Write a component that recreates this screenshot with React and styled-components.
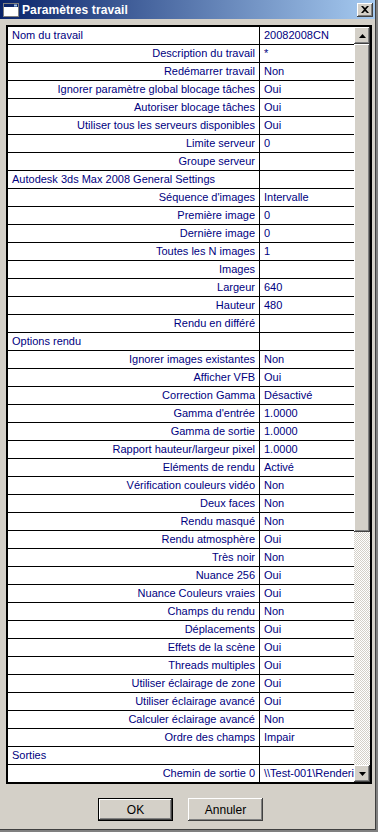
import styled, { createGlobalStyle, css } from "styled-components";

const GlobalStyle = createGlobalStyle`
  html, body {
    margin: 0;
    padding: 0;
    background: #d4d0c8;
  }
  * {
    box-sizing: border-box;
  }
`;

const ROWS = [
  ["Nom du travail", "20082008CN", "left"],
  ["Description du travail", "*"],
  ["Redémarrer travail", "Non"],
  ["Ignorer paramètre global blocage tâches", "Oui"],
  ["Autoriser blocage tâches", "Oui"],
  ["Utiliser tous les serveurs disponibles", "Oui"],
  ["Limite serveur", "0"],
  ["Groupe serveur", ""],
  ["Autodesk 3ds Max 2008 General Settings", "", "left"],
  ["Séquence d'images", "Intervalle"],
  ["Première image", "0"],
  ["Dernière image", "0"],
  ["Toutes les N images", "1"],
  ["Images", ""],
  ["Largeur", "640"],
  ["Hauteur", "480"],
  ["Rendu en différé", ""],
  ["Options rendu", "", "left"],
  ["Ignorer images existantes", "Non"],
  ["Afficher VFB", "Oui"],
  ["Correction Gamma", "Désactivé"],
  ["Gamma d'entrée", "1.0000"],
  ["Gamma de sortie", "1.0000"],
  ["Rapport hauteur/largeur pixel", "1.0000"],
  ["Eléments de rendu", "Activé"],
  ["Vérification couleurs vidéo", "Non"],
  ["Deux faces", "Non"],
  ["Rendu masqué", "Non"],
  ["Rendu atmosphère", "Oui"],
  ["Très noir", "Non"],
  ["Nuance 256", "Oui"],
  ["Nuance Couleurs vraies", "Oui"],
  ["Champs du rendu", "Non"],
  ["Déplacements", "Oui"],
  ["Effets de la scène", "Oui"],
  ["Threads multiples", "Oui"],
  ["Utiliser éclairage de zone", "Oui"],
  ["Utiliser éclairage avancé", "Oui"],
  ["Calculer éclairage avancé", "Non"],
  ["Ordre des champs", "Impair"],
  ["Sorties", "", "left"],
  ["Chemin de sortie 0", "\\\\Test-001\\Renderi"],
];

const raised = css`
  background: #d4d0c8;
  box-shadow: inset -1px -1px #404040, inset 1px 1px #ffffff,
    inset -2px -2px #808080, inset 2px 2px #d4d0c8;
`;

const Window = styled.div`
  width: 378px;
  height: 832px;
  display: flex;
  flex-direction: column;
  background: #d4d0c8;
  border-right: 2px solid;
  border-bottom: 2px solid;
  border-color: #808080;
  box-shadow: inset -1px -1px #404040;
  font-family: "Liberation Sans", Arial, sans-serif;
  font-size: 11px;
  overflow: hidden;
`;

const TitleBar = styled.div`
  height: 19px;
  margin-right: 1px;
  display: flex;
  align-items: center;
  gap: 3px;
  padding: 0 2px 0 3px;
  background: linear-gradient(to right, #0a246a, #a6caf0);
  color: #fff;
  font-weight: bold;
  font-size: 12px;
`;

const TitleText = styled.span`
  flex: 1;
  letter-spacing: 0.1px;
`;

const CloseButton = styled.div`
  ${raised};
  width: 16px;
  height: 14px;
  display: flex;
  align-items: center;
  justify-content: center;
`;

const Body = styled.div`
  flex: 1;
  display: flex;
  flex-direction: column;
  padding: 6px 4px 0 6px;
`;

const ListFrame = styled.div`
  height: 759px;
  display: flex;
  border: 2px solid #000;
  background: #fff;
`;

const Table = styled.div`
  flex: 1;
  overflow: hidden;
`;

const Row = styled.div`
  height: 18px;
  display: grid;
  grid-template-columns: 252px 1fr;
  border-bottom: 1px solid #000;
  color: #000080;
  line-height: 17px;
`;

const Label = styled.div`
  border-right: 1px solid #000;
  padding: 0 4px;
  white-space: nowrap;
  overflow: hidden;
  text-align: ${(p) => (p.$left ? "left" : "right")};
`;

const Value = styled.div`
  padding: 0 0 0 4px;
  white-space: nowrap;
  overflow: hidden;
`;

const ScrollBar = styled.div`
  width: 16px;
  display: flex;
  flex-direction: column;
  background: repeating-conic-gradient(#d4d0c8 0% 25%, #ffffff 0% 50%) 0 0 / 2px 2px;
`;

const ScrollButton = styled.div`
  ${raised};
  height: 17px;
  display: flex;
  align-items: center;
  justify-content: center;
`;

const Thumb = styled.div`
  ${raised};
  height: ${(p) => p.$size}px;
`;

const Track = styled.div`
  flex: 1;
`;

const Footer = styled.div`
  display: flex;
  gap: 15px;
  padding: 14px 0 0 92px;
`;

const Button = styled.div`
  ${raised};
  width: 75px;
  height: 23px;
  display: flex;
  align-items: center;
  justify-content: center;
  color: #000;
  font-size: 12px;
  ${(p) =>
    p.$default &&
    css`
      border: 1px solid #000;
      box-shadow: inset -1px -1px #404040, inset 1px 1px #ffffff,
        inset -2px -2px #808080;
    `}
`;

function WindowIcon() {
  return (
    <svg width="16" height="14" viewBox="0 0 16 14">
      <rect x="0.5" y="0.5" width="15" height="13" fill="#fff" stroke="#808080" />
      <rect x="1" y="1" width="14" height="3" fill="#0a246a" />
      <rect x="11" y="1.5" width="3" height="2" fill="#a6caf0" />
    </svg>
  );
}

function CloseGlyph() {
  return (
    <svg width="8" height="7" viewBox="0 0 8 7">
      <path d="M0 0h2l2 2 2-2h2L5 3.5 8 7H6L4 5 2 7H0l3-3.5z" fill="#000" />
    </svg>
  );
}

function Arrow({ down }) {
  return (
    <svg width="7" height="4" viewBox="0 0 7 4">
      <path d={down ? "M0 0h7L3.5 4z" : "M3.5 0L7 4H0z"} fill="#000" />
    </svg>
  );
}

export default function App() {
  return (
    <>
      <GlobalStyle />
      <Window>
        <TitleBar>
          <WindowIcon />
          <TitleText>Paramètres travail</TitleText>
          <CloseButton>
            <CloseGlyph />
          </CloseButton>
        </TitleBar>
        <Body>
          <ListFrame>
            <Table>
              {ROWS.map(([label, value, kind]) => (
                <Row key={label}>
                  <Label $left={kind === "left"}>{label}</Label>
                  <Value>{value}</Value>
                </Row>
              ))}
            </Table>
            <ScrollBar>
              <ScrollButton>
                <Arrow />
              </ScrollButton>
              <Thumb $size={488} />
              <Track />
              <ScrollButton>
                <Arrow down />
              </ScrollButton>
            </ScrollBar>
          </ListFrame>
          <Footer>
            <Button $default>OK</Button>
            <Button>Annuler</Button>
          </Footer>
        </Body>
      </Window>
    </>
  );
}
